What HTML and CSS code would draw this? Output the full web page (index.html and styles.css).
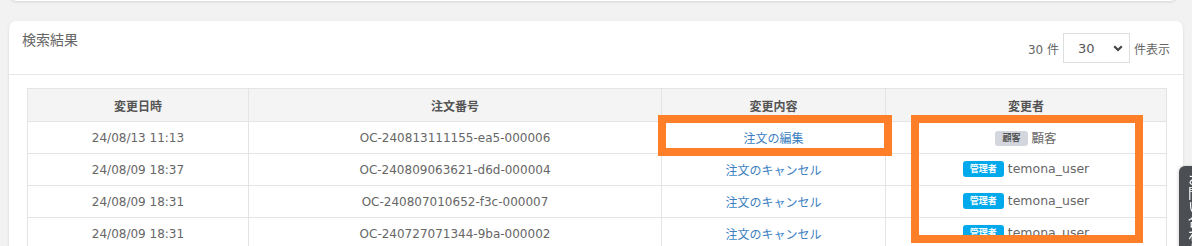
FILE: index.html
```html
<!DOCTYPE html>
<html lang="ja">
<head>
<meta charset="utf-8">
<title>検索結果</title>
<link rel="stylesheet" href="styles.css">
</head>
<body>
<div class="page">
  <div class="prev-card"></div>
  <section class="card">
    <header class="card-head">
      <h2 class="card-title">検索結果</h2>
      <div class="per-page">
        <span class="count">30 件</span>
        <div class="select">
          <span>30</span>
          <svg class="chev" width="10" height="7" viewBox="0 0 10 7"><path d="M1.2 1.2 5 5 8.8 1.2" fill="none" stroke="#444" stroke-width="2.2"/></svg>
        </div>
        <span class="unit">件表示</span>
      </div>
    </header>
    <div class="card-body">
      <div class="table-wrap">
        <table class="log">
          <colgroup>
            <col class="c1"><col class="c2"><col class="c3"><col class="c4">
          </colgroup>
          <thead>
            <tr><th>変更日時</th><th>注文番号</th><th>変更内容</th><th>変更者</th></tr>
          </thead>
          <tbody>
            <tr>
              <td>24/08/13 11:13</td>
              <td>OC-240813111155-ea5-000006</td>
              <td><a class="link" href="#">注文の編集</a></td>
              <td><span class="badge badge-grey">顧客</span><span class="who">顧客</span></td>
            </tr>
            <tr>
              <td>24/08/09 18:37</td>
              <td>OC-240809063621-d6d-000004</td>
              <td><a class="link" href="#">注文のキャンセル</a></td>
              <td><span class="badge badge-blue">管理者</span><span class="who">temona_user</span></td>
            </tr>
            <tr>
              <td>24/08/09 18:31</td>
              <td>OC-240807010652-f3c-000007</td>
              <td><a class="link" href="#">注文のキャンセル</a></td>
              <td><span class="badge badge-blue">管理者</span><span class="who">temona_user</span></td>
            </tr>
            <tr>
              <td>24/08/09 18:31</td>
              <td>OC-240727071344-9ba-000002</td>
              <td><a class="link" href="#">注文のキャンセル</a></td>
              <td><span class="badge badge-blue">管理者</span><span class="who">temona_user</span></td>
            </tr>
          </tbody>
        </table>
        <div class="mark mark-edit"></div>
        <div class="mark mark-user"></div>
      </div>
    </div>
  </section>
</div>
<div class="side-tab">お問い合わせ</div>
</body>
</html>
```

FILE: styles.css
```css
html, body {
  margin: 0;
  padding: 0;
  background: #f2f2f2;
  overflow: hidden;
}
body {
  font-family: "DejaVu Sans", "Noto Sans CJK JP", sans-serif;
  font-size: 12px;
  color: #666;
  width: 1192px;
  height: 246px;
}
.page {
  padding: 0 9px;
}
.prev-card {
  height: 10px;
  margin-top: -9px;
  background: #fff;
  border-radius: 0 0 8px 8px;
  box-shadow: 0 1px 3px rgba(0,0,0,0.12);
  margin-right: 5px;
}
.card {
  margin-top: 20px;
  background: #fff;
  border-radius: 7px 7px 0 0;
  box-shadow: 0 1px 3px rgba(0,0,0,0.12);
  height: 260px;
}
.card-head {
  display: flex;
  justify-content: space-between;
  align-items: flex-start;
  height: 54px;
  box-sizing: border-box;
  padding: 9px 13px 0 13px;
  border-bottom: 1px solid #e6e6e6;
}
.card-title {
  margin: 0;
  font-size: 14px;
  font-weight: normal;
  line-height: 20px;
  color: #666;
}
.per-page {
  display: flex;
  align-items: center;
  margin-top: 3px;
  gap: 4px;
  color: #666;
}
.select {
  width: 67px;
  height: 30px;
  box-sizing: border-box;
  border: 1px solid #dedede;
  display: flex;
  align-items: center;
  justify-content: space-between;
  padding: 0 6px 0 14px;
  font-size: 13px;
  color: #555;
  background: #fff;
}
.chev {
  display: block;
}
.card-body {
  padding: 13px 17px 0 18px;
}
.table-wrap {
  position: relative;
}
.log {
  width: 100%;
  border-collapse: collapse;
  table-layout: fixed;
}
.c1 { width: 221px; }
.c2 { width: 413px; }
.c3 { width: 224px; }
.c4 { width: 281px; }
.log th, .log td {
  border: 1px solid #e4e4e4;
  text-align: center;
  vertical-align: middle;
  padding: 0;
  height: 31px;
}
.log th {
  background: #f4f4f4;
  color: #555;
  font-weight: bold;
  font-size: 12px;
  height: 32px;
}
.log td {
  color: #666;
}
.link {
  color: #3d7fc1;
  text-decoration: none;
}
.badge {
  display: inline-block;
  vertical-align: middle;
  font-size: 9px;
  font-weight: bold;
  line-height: 15px;
  border-radius: 3px;
  margin-right: 4px;
  position: relative;
  top: -1px;
}
.badge-grey {
  background: #d3d7dd;
  color: #555;
  padding: 0 7px;
}
.badge-blue {
  background: #00a8ec;
  color: #fff;
  padding: 0 7px;
  line-height: 16px;
}
.who {
  color: #666;
  font-size: 12.5px;
}
.mark {
  position: absolute;
  border: 8px solid #fe7f28;
  box-sizing: border-box;
}
.mark-edit {
  left: 631px;
  top: 27px;
  width: 234px;
  height: 41px;
}
.mark-user {
  left: 884px;
  top: 27px;
  width: 232px;
  height: 128px;
}
.side-tab {
  position: fixed;
  left: 1179px;
  top: 166px;
  width: 30px;
  height: 140px;
  box-sizing: border-box;
  padding: 6px 0 0 6px;
  background: #4b4e53;
  border-radius: 6px 0 0 6px;
  color: #fff;
  font-size: 14px;
  line-height: 18px;
  writing-mode: vertical-lr;
  box-shadow: -1px 0 3px rgba(0,0,0,0.15);
}
```
